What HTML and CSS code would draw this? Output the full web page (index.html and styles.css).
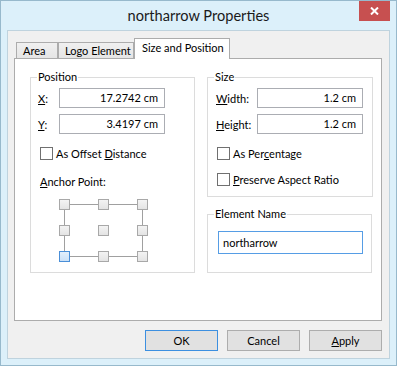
FILE: index.html
```html
<!DOCTYPE html>
<html>
<head>
<meta charset="utf-8">
<link rel="stylesheet" href="styles.css">
</head>
<body>
<div class="window">
  <div class="titlebar">
    <span class="spacer"></span>
    <div class="title">northarrow Properties</div>
    <div class="close-wrap">
      <div class="close">
        <svg width="9" height="8" viewBox="0 0 9 8"><path d="M1 0.5 L8 7.5 M8 0.5 L1 7.5" stroke="#fff" stroke-width="2" fill="none"/></svg>
      </div>
    </div>
  </div>
  <div class="client">
    <div class="tabs">
      <div class="tab tab-area">Area</div>
      <div class="tab tab-logo">Logo Element</div>
      <div class="tab tab-active">Size and Position</div>
    </div>
    <div class="panel">
      <fieldset class="group group-pos">
        <legend>Position</legend>
        <div class="row first-row">
          <span class="lbl lbl-pos"><u>X</u>:</span>
          <div class="input input-num">17.2742 cm</div>
        </div>
        <div class="row">
          <span class="lbl lbl-pos"><u>Y</u>:</span>
          <div class="input input-num">3.4197 cm</div>
        </div>
        <label class="check check-first check-pos"><span class="box"></span><span>As Offset <u>D</u>istance</span></label>
        <div class="anchor-lbl"><u>A</u>nchor Point:</div>
        <svg class="anchor" width="90" height="64" viewBox="0 0 90 64">
          <defs>
            <linearGradient id="g" x1="0" y1="0" x2="0" y2="1">
              <stop offset="0" stop-color="#f4f4f4"/>
              <stop offset="1" stop-color="#e3e3e3"/>
            </linearGradient>
            <linearGradient id="gb" x1="0" y1="0" x2="0" y2="1">
              <stop offset="0" stop-color="#e4f0fc"/>
              <stop offset="1" stop-color="#c9e0f7"/>
            </linearGradient>
          </defs>
          <g stroke="#a0a0a0" stroke-width="1">
            <line x1="11" y1="5.5" x2="39" y2="5.5"/>
            <line x1="50" y1="5.5" x2="78" y2="5.5"/>
            <line x1="11" y1="57.5" x2="39" y2="57.5"/>
            <line x1="50" y1="57.5" x2="78" y2="57.5"/>
            <line x1="5.5" y1="11" x2="5.5" y2="26"/>
            <line x1="5.5" y1="37" x2="5.5" y2="52"/>
            <line x1="83.5" y1="11" x2="83.5" y2="26"/>
            <line x1="83.5" y1="37" x2="83.5" y2="52"/>
          </g>
          <g stroke="#a8a8a8" fill="url(#g)">
            <rect x="0.5" y="0.5" width="10" height="10"/>
            <rect x="39.5" y="0.5" width="10" height="10"/>
            <rect x="78.5" y="0.5" width="10" height="10"/>
            <rect x="0.5" y="26.5" width="10" height="10"/>
            <rect x="39.5" y="26.5" width="10" height="10"/>
            <rect x="78.5" y="26.5" width="10" height="10"/>
            <rect x="39.5" y="52.5" width="10" height="10"/>
            <rect x="78.5" y="52.5" width="10" height="10"/>
          </g>
          <rect x="0.5" y="52.5" width="10" height="10" stroke="#4a8fd8" fill="url(#gb)"/>
        </svg>
      </fieldset>
      <div class="rightcol">
        <fieldset class="group group-size">
          <legend>Size</legend>
          <div class="row first-row">
            <span class="lbl lbl-size"><u>W</u>idth:</span>
            <div class="input input-num">1.2 cm</div>
          </div>
          <div class="row">
            <span class="lbl lbl-size"><u>H</u>eight:</span>
            <div class="input input-num">1.2 cm</div>
          </div>
          <label class="check check-first check-size"><span class="box"></span><span>As Per<u>c</u>entage</span></label>
          <label class="check check-second check-size"><span class="box"></span><span><u>P</u>reserve Aspect Ratio</span></label>
        </fieldset>
        <fieldset class="group group-name">
          <legend>Element Name</legend>
          <div class="input input-name">northarrow</div>
        </fieldset>
      </div>
    </div>
    <div class="buttons">
      <div class="btn btn-default">OK</div>
      <div class="btn">Cancel</div>
      <div class="btn"><u>A</u>pply</div>
    </div>
  </div>
</div>
</body>
</html>
```
FILE: styles.css
```css
* { box-sizing: border-box; }
html, body { margin: 0; padding: 0; }
body {
  font-family: "Lato", "Noto Sans", sans-serif;
  font-size: 11px;
  color: #000;
  background: #fff;
}
.window {
  width: 397px;
  height: 366px;
  background: #dcf0fa;
  border: 1px solid #97b9cc;
  display: flex;
  flex-direction: column;
}
.titlebar {
  height: 29px;
  display: grid;
  grid-template-columns: 1fr auto 1fr;
  align-items: start;
  flex: none;
}
.title {
  font-size: 14.6px;
  line-height: 29px;
  color: #1a1a1a;
  white-space: nowrap;
}
.close-wrap {
  display: flex;
  justify-content: flex-end;
}
.close {
  width: 31px;
  height: 20px;
  margin-right: 6px;
  background: #c75050;
  display: flex;
  align-items: center;
  justify-content: center;
}
.close svg { display: block; }
.client {
  flex: 1;
  margin: 0 6px 6px 6px;
  border: 1px solid #bfd3de;
  background: #f0f0f0;
  padding: 7px 7px 7px 6px;
  display: flex;
  flex-direction: column;
}
.tabs {
  height: 20px;
  display: flex;
  align-items: flex-end;
  flex: none;
}
.tab {
  height: 16px;
  border: 1px solid #acacac;
  border-bottom: none;
  background: linear-gradient(#f0f0f0, #e5e5e5);
  line-height: 15px;
  padding-left: 6px;
  white-space: nowrap;
  overflow: hidden;
}
.tab-area { margin-left: 2px; width: 42px; }
.tab-logo { margin-left: 0; width: 76px; }
.tab-active {
  width: 96px;
  height: 21px;
  margin-bottom: -1px;
  background: #fff;
  padding-left: 7px;
  line-height: 17px;
  position: relative;
  z-index: 1;
}
.panel {
  height: 263px;
  flex: none;
  border: 1px solid #acacac;
  background: #fff;
  padding: 11px 8px 0 15px;
  display: flex;
  gap: 12px;
  align-items: flex-start;
}
.group {
  margin: 0;
  padding: 0;
  min-width: 0;
  border: 1px solid #dcdcdc;
}
.group legend {
  margin-left: 6px;
  padding: 0 1px;
  line-height: 14px;
  font-size: 11px;
}
.group-pos { width: 165px; height: 203px; }
.rightcol {
  display: flex;
  flex-direction: column;
  gap: 10px;
  width: 166px;
}
.group-size { width: 166px; height: 127px; }
.group-name { width: 165px; height: 66px; }
.row {
  display: flex;
  align-items: center;
  height: 20px;
  margin-top: 6px;
}
.row.first-row { margin-top: 4px; }
.lbl { white-space: nowrap; }
.lbl-pos { margin-left: 7px; width: 21px; }
.lbl-size { margin-left: 8px; width: 41px; }
.input {
  border: 1px solid #abadb3;
  background: #fff;
  white-space: nowrap;
}
.input-num {
  width: 106px;
  height: 20px;
  line-height: 18px;
  text-align: right;
  padding-right: 6px;
}
.input-name {
  width: 145px;
  height: 23px;
  margin: 10px 0 0 10px;
  border-color: #569de5;
  line-height: 21px;
  padding-left: 4px;
}
.check {
  display: flex;
  align-items: center;
  gap: 3px;
  height: 13px;
  white-space: nowrap;
}
.check-pos { margin-left: 9px; }
.check-size { margin-left: 9px; }
.check-first { margin-top: 13px; }
.check-second { margin-top: 13px; }
.box {
  width: 13px;
  height: 13px;
  border: 1px solid #707070;
  background: #fff;
  flex: none;
}
.anchor-lbl {
  margin: 15px 0 0 9px;
  line-height: 14px;
}
.anchor {
  display: block;
  margin: 10px 0 0 28px;
}
.buttons {
  margin-top: 9px;
  display: flex;
  justify-content: flex-end;
  gap: 9px;
}
.btn {
  width: 73px;
  height: 21px;
  border: 1px solid #adadad;
  background: #e1e1e1;
  text-align: center;
  line-height: 19px;
}
.btn-default { border-color: #3c8fe0; }
u { text-decoration: underline; text-underline-offset: 1px; }
```
